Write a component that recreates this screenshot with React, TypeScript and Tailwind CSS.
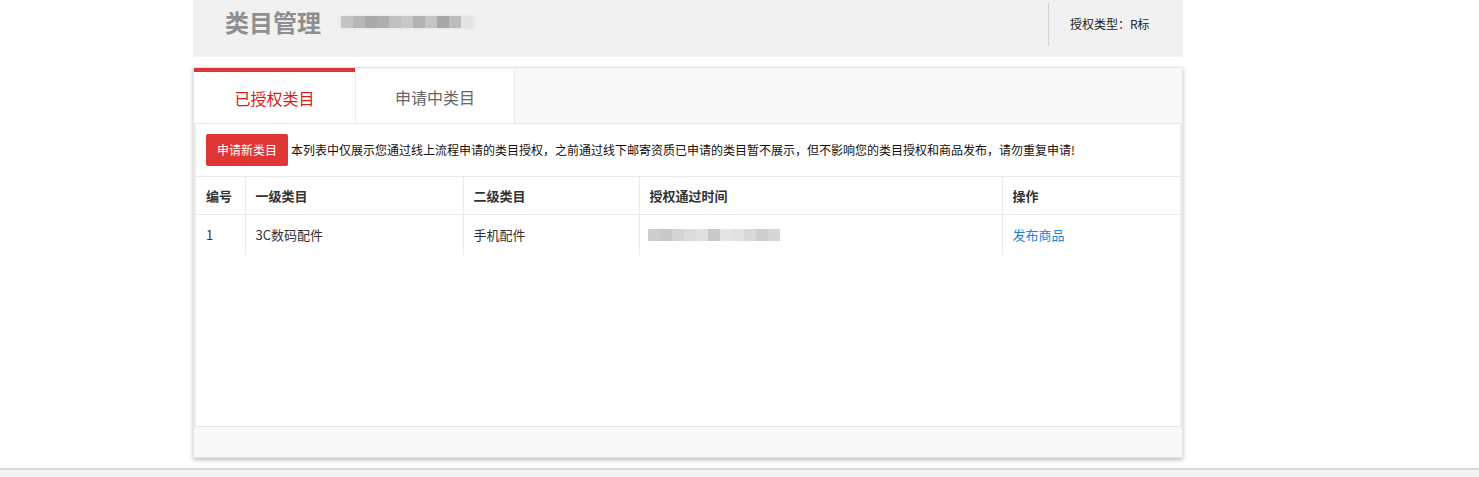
import React from "react";

const cols = [
  { label: "编号", w: "w-[49px]" },
  { label: "一级类目", w: "w-[218px]" },
  { label: "二级类目", w: "w-[176px]" },
  { label: "授权通过时间", w: "w-[363px]" },
  { label: "操作", w: "w-[178px]" },
];

function Blur({ shades, h }: { shades: string[]; h: string }) {
  return (
    <div className={`flex ${h} blur-[0.6px]`}>
      {shades.map((c, i) => (
        <span key={i} className={`w-[12px] ${c}`} />
      ))}
    </div>
  );
}

export default function App() {
  return (
    <div className="relative h-[477px] w-[1479px] overflow-hidden bg-white font-['Microsoft_YaHei','Noto_Sans_CJK_SC',sans-serif] text-[#333]">
      <div className="ml-[193px] w-[990px]">
        <header className="flex h-[57px] items-start bg-[#f1f1f1]">
          <div className="flex flex-1 items-center gap-[16px] pl-[32px] pt-[6px]">
            <h1 className="text-[24px] font-bold leading-[32px] text-[#8f8f8f]">类目管理</h1>
            <div className="rounded-full bg-[#ececec] px-[4px] py-[2px]">
              <Blur
                h="h-[12px]"
                shades={[
                  "bg-[#c4c4c4]",
                  "bg-[#b6b6b6]",
                  "bg-[#a9a9a9]",
                  "bg-[#aeaeae]",
                  "bg-[#c0c0c0]",
                  "bg-[#c8c8c8]",
                  "bg-[#b2b2b2]",
                  "bg-[#c5c5c5]",
                  "bg-[#a8a8a8]",
                  "bg-[#bdbdbd]",
                  "bg-[#e4e4e4]",
                ]}
              />
            </div>
          </div>
          <div className="mt-[3px] h-[43px] w-px bg-[#d2d2d2]" />
          <div className="w-[134px] pl-[21px] pt-[16px] text-[12px] leading-[16px] text-[#222]">
            授权类型：R标
          </div>
        </header>

        <section className="mt-[10px] border border-[#e6e6e6] bg-[#f8f8f8] shadow-[0_2px_4px_rgba(0,0,0,0.25)]">
          <div className="flex h-[56px] border-b border-[#e8e8e8]">
            <div className="flex w-[161px] items-center justify-center border-t-[4px] border-[#e03636] bg-white text-[16px] text-[#d42020]">
              已授权类目
            </div>
            <div className="mt-[2px] flex w-[160px] items-center justify-center border-x border-[#ececec] bg-white text-[16px] text-[#666]">
              申请中类目
            </div>
          </div>

          <div className="h-[302px] border-l-[2px] border-r-[2px] border-[#ececec] bg-white">
            <div className="flex items-center gap-[3px] px-[10px] pb-[10px] pt-[10px]">
              <button
                type="button"
                className="h-[32px] w-[82px] rounded-[2px] bg-[#e03535] text-[12px] text-white"
              >
                申请新类目
              </button>
              <p className="text-[12px] text-[#111]">
                本列表中仅展示您通过线上流程申请的类目授权，之前通过线下邮寄资质已申请的类目暂不展示，但不影响您的类目授权和商品发布，请勿重复申请!
              </p>
            </div>

            <table className="border-collapse text-[13px]">
              <thead>
                <tr className="h-[38px] border-y border-[#ebebeb]">
                  {cols.map((c, i) => (
                    <th
                      key={c.label}
                      className={`${c.w} px-[10px] text-left font-semibold text-[#333] ${i > 0 ? "border-l border-[#ebebeb]" : ""}`}
                    >
                      {c.label}
                    </th>
                  ))}
                </tr>
              </thead>
              <tbody>
                <tr className="h-[40px] text-[13px]">
                  <td className="px-[10px]">1</td>
                  <td className="border-l border-[#ebebeb] px-[10px]">3C数码配件</td>
                  <td className="border-l border-[#ebebeb] px-[10px]">手机配件</td>
                  <td className="border-l border-[#ebebeb] px-[8px]">
                    <Blur
                      h="h-[12px]"
                      shades={[
                        "bg-[#cdcdcd]",
                        "bg-[#c8c8c8]",
                        "bg-[#d4d4d4]",
                        "bg-[#dcdcdc]",
                        "bg-[#e0e0e0]",
                        "bg-[#c9c9c9]",
                        "bg-[#e6e6e6]",
                        "bg-[#e2e2e2]",
                        "bg-[#d9d9d9]",
                        "bg-[#cecece]",
                        "bg-[#d6d6d6]",
                      ]}
                    />
                  </td>
                  <td className="border-l border-[#ebebeb] px-[10px]">
                    <a href="#" className="text-[#1a86d8]">
                      发布商品
                    </a>
                  </td>
                </tr>
              </tbody>
            </table>
          </div>

          <div className="h-[31px] border-t border-[#e8e8e8] bg-[#f8f8f8]" />
        </section>
      </div>

      <div className="absolute bottom-0 left-0 h-[9px] w-full border-t-[2px] border-[#d8d8dd] bg-[#f3f3f3]" />
    </div>
  );
}
